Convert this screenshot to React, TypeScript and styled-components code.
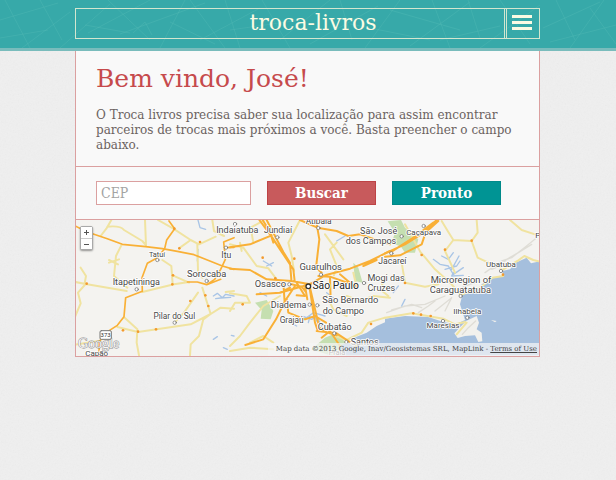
import React from "react";
import styled, { createGlobalStyle } from "styled-components";

const slab = `"DejaVu Serif", serif`;
const slabNarrow = `"DejaVu Serif Condensed", "DejaVu Serif", serif`;

const grain = `url("data:image/svg+xml,%3Csvg xmlns='http://www.w3.org/2000/svg' width='160' height='160'%3E%3Cfilter id='n'%3E%3CfeTurbulence type='fractalNoise' baseFrequency='.6' numOctaves='3' stitchTiles='stitch'/%3E%3CfeColorMatrix type='saturate' values='0'/%3E%3C/filter%3E%3Crect width='160' height='160' filter='url(%23n)' opacity='.07'/%3E%3C/svg%3E")`;

const GlobalStyle = createGlobalStyle`
  * { box-sizing: border-box; }
  body {
    margin: 0;
    min-height: 100vh;
    background: #efefef ${grain};
    font-family: ${slab};
    color: #6b625f;
  }
`;

const Header = styled.header`
  position: relative;
  padding: 8px 76px 9px 75px;
  background: #37a9a9;
  border-bottom: 3px solid #79bcbc;
`;

const HeaderLines = styled.svg`
  position: absolute;
  inset: 0;
  width: 100%;
  height: 100%;
`;

const TitleBar = styled.div`
  position: relative;
  display: flex;
  gap: 1px;
  height: 31px;
  border: 1px solid #d3e6cf;
`;

const SiteTitle = styled.h1`
  flex: 1;
  margin: 0;
  padding-left: 46px;
  border-right: 1px solid #d3e6cf;
  color: #fbfbe3;
  font-size: 22px;
  line-height: 27px;
  font-weight: 400;
  text-align: center;
`;

const MenuButton = styled.button`
  display: flex;
  align-items: center;
  justify-content: center;
  width: 33px;
  padding: 0 2px 2px 0;
  border: 0;
  border-left: 1px solid #d3e6cf;
  background: none;
  cursor: pointer;
`;

const Panel = styled.main`
  margin: 0 76px 0 75px;
  border: solid #dba0a0;
  border-width: 0 1px 1px;
  background: #f9f9f9;
`;

const Welcome = styled.section`
  padding: 12px 20px 13px;
  border-bottom: 1px solid #dba0a0;
`;

const Heading = styled.h2`
  margin: 0 0 13px;
  color: #c64a4c;
  font-size: 25px;
  line-height: 32px;
  font-weight: 400;
`;

const Intro = styled.p`
  margin: 0;
  font-size: 12px;
  line-height: 15px;
`;

const Search = styled.form`
  display: grid;
  grid-template-columns: 155fr 109fr 109fr;
  gap: 16px;
  padding: 14px 38px 14px 20px;
  border-bottom: 1px solid #dba0a0;
`;

const CepInput = styled.input`
  min-width: 0;
  height: 24px;
  padding: 0 4px;
  border: 1px solid #dba0a0;
  border-radius: 0;
  background: #fff;
  color: #6b625f;
  font: 14px ${slabNarrow};
  &::placeholder { color: #a3a3a3; opacity: 1; }
`;

const Action = styled.button<{ $tone: string; $edge: string }>`
  height: 24px;
  padding: 0;
  border: 1px solid ${(p) => p.$edge};
  background: ${(p) => p.$tone};
  color: #fff;
  font: bold 15px/22px ${slabNarrow};
  cursor: pointer;
`;

const MapFrame = styled.section`
  position: relative;
  height: 136px;
  overflow: hidden;
  background: #f4f3f0;
`;

const MapDrawing = styled.svg`
  display: block;
  width: 100%;
  height: 100%;
  font-family: Roboto, sans-serif;
`;

const ZoomControls = styled.div`
  position: absolute;
  top: 6px;
  left: 4px;
  display: flex;
  flex-direction: column;
  border: 1px solid #a9a9a9;
  border-radius: 2px;
  background: #fff;
  box-shadow: 0 1px 2px #0006;
`;

const ZoomButton = styled.button`
  display: flex;
  align-items: center;
  justify-content: center;
  width: 11px;
  height: 11px;
  padding: 0;
  border: 0;
  background: #fff;
  & + & { border-top: 1px solid #ccc; }
`;

const Attribution = styled.div`
  position: absolute;
  right: 0;
  bottom: 0;
  padding: 0 2px 0 8px;
  background: #f5f5f5b8;
  color: #444;
  font-size: 7px;
  line-height: 13px;
  white-space: nowrap;
`;

const TermsLink = styled.a`
  color: inherit;
`;

const headerStrokes =
  "M0 20L58 3M5 0L30 48M22 48L70 12M40 0L62 40M0 38L48 30M60 48L110 4M85 25L130 33M88 33L150 0M108 0L150 40M133 33L145 22L152 35M120 34L205 3M160 48L185 0M170 22L215 44M190 0L225 48M200 40L260 8M225 0L240 48M230 30L300 20M262 0L290 48M280 40L330 0M310 44L378 6M340 0L352 40M350 24L430 40M365 48L400 0M390 10L460 30M410 46L470 2M432 0L450 48M440 40L500 26M468 0L480 38M480 48L540 5M500 0L530 44M543 28L600 2M556 0L575 40M550 42L616 25M570 48L604 0M590 8L616 44";

const minorRoads = [
  { x: -6, d: "M112 12L97 38L80 60M100 32Q140 28 150 42L205 75L216 88M213 12L216 88M298 38L350 72L375 85L425 62M370 85L372 165L385 185M350 72L318 95M142 88L126 120L120 180L160 215M105 132L132 145M105 140L135 130M20 155L36 180L32 202M4 198L35 204L158 225M35 204L12 230L20 262L4 300M265 132L292 150L296 205M205 228L300 205L345 198M296 178L345 200M385 215L410 294L350 325L192 348L130 333M152 305L190 340L188 380L195 418M372 230L330 290L302 320M410 294L388 310L375 360L350 385L348 418M410 294L440 275L480 278M298 38L252 12M415 12L420 45L450 60M75 375L40 380L4 386M455 228L480 225" },
  { x: 462, d: "M0 85L40 95L80 150L115 157L140 190M30 80L35 105M70 80L62 35L100 14M210 12L175 80L185 120L192 165M320 80L300 100L320 150L312 178M285 55L340 130M470 175L450 220L475 240M370 170L378 205M0 232L50 240L60 260L15 260L0 285M150 240L100 270L60 320L30 360L0 390M60 380L100 360L130 380M290 240L310 280L350 300M465 305L415 320L395 350L350 372L315 360M350 240L390 255L430 240L480 245M0 405L60 395L130 400" },
  { x: 927, d: "M170 15L190 48L205 72L260 75L278 50L275 12M205 72L180 105L210 170M260 75L278 125L315 142L348 155M375 12L410 42L450 55M110 112L150 160L200 205L228 238M50 140L60 200L120 212L160 205M0 305L80 292L175 308L210 325L240 318M230 236L285 215L322 185L355 180M60 25L110 115M355 160L400 133L418 120L445 132L460 136M245 320L215 355" },
];

const highways = [
  { x: -6, w: 5, d: "M4 30L40 48L100 68L145 85L215 92L265 98L310 106L360 116L400 132L445 150L480 160M75 410L76 376L102 346L130 328L150 302L155 245L205 226L204 185L220 142L250 125L272 98L278 72L302 38L285 15M340 198L370 198L398 206L422 190L440 160L454 130L449 78L480 65M398 206L440 190M450 95L480 94" },
  { x: 462, w: 6, d: "M0 158L60 162L110 190L185 195L240 205L285 178L360 158L420 135L480 105M88 12L125 62L150 100L190 160L194 195M110 12L135 60L160 108L180 140L184 190M98 12L120 48L130 80M0 94L60 85L125 58M258 12L268 70L258 155L275 170M210 12L262 35L320 45L355 60L390 55L480 85M80 235L150 230L220 210L250 200M46 387L100 370L138 310L165 255L195 210M240 215L268 335L290 350M238 210L255 320L262 340M170 250L175 290L225 310L255 300L288 320M265 180L300 182L380 210M150 230L180 215M200 200L225 240L200 238M225 210L232 250M160 200L165 275M260 345L320 352L378 390M268 340L300 352L320 358M275 365L300 345L330 390M400 150L440 132M330 175L360 200M300 182L302 250M185 205L215 212L228 228" },
  { x: 927, w: 6, d: "M0 112L60 85L130 42L160 15M0 122L45 118L110 85L125 40L155 12M15 110L90 62L145 20" },
];

const greens = [
  { x: 927, d: "M8 16L48 12L60 35L100 70L90 110L60 110L48 92L20 80L30 50Z" },
  { x: 462, d: "M75 260L110 252L130 285L122 310L92 308L95 282ZM244 400L285 365L320 350L365 400L300 418ZM370 140L385 155L398 200L375 195Z" },
];

const waters = [
  { x: 462, d: "M480 312L440 330L410 350L372 365L360 380L340 384L315 418H480Z" },
  { x: 927, d: "M0 308L60 300L130 303L175 318L212 325L240 312L225 265L232 237L260 222L285 215L290 205L322 185L355 180L352 165L375 160L392 140L425 125L438 142L465 136V418H0Z" },
];

const islands =
  "M243 315L275 300L282 320L275 340L290 350L292 376L280 378L270 358L240 360L218 366L208 352ZM318 312L335 315L330 319Z";

const lakes = [
  { x: -6, d: "M418 240L430 232L445 245L455 235L480 240M425 248L440 246L470 244M418 370L430 362M448 395L460 400M472 358L480 360M372 12L378 35L395 40M372 100L370 135" },
  { x: 462, d: "M100 135L125 150M110 150L130 140M215 300L245 310L260 300L275 330M235 320L240 300M250 290L285 300M110 240L90 230M320 75L345 60M180 320L200 330M290 230L310 245M220 312L250 290L262 318" },
  { x: 927, d: "M145 130L165 145L190 150L205 175L235 155M170 120L190 130L205 110M180 160L215 150L225 135M25 230L40 210M60 250L50 270M205 170L200 180L235 178M222 120L200 160" },
];

const reliefs =
  "M5 290L60 270L120 265L180 240M20 282L80 265L110 275M150 285L200 245L180 285M300 170L350 135L380 125L418 95L455 65M320 160L345 150L365 130L400 110L440 85M205 230L240 210L270 200M100 290L130 270L150 255M232 355L250 335L272 315";

const places: [string, number, number, number][] = [
  ["Indaiatuba", 484, 52, 27], ["Jundiaí", 606, 52, 26], ["Atibaia", 728, 24, 25],
  ["Tatuí", 243, 123, 22], ["Itu", 451, 126, 26], ["Sorocaba", 392, 182, 28],
  ["Itapetininga", 181, 208, 27], ["Pilar do Sul", 295, 309, 25], ["Capão", 62, 421, 24],
  ["Guarulhos", 734, 163, 28], ["Osasco", 583, 214, 28], ["São Paulo", 779, 220, 31],
  ["São Bernardo", 823, 261, 28], ["do Campo", 802, 294, 27], ["Diadema", 638, 275, 27],
  ["Grajaú", 647, 322, 25], ["Cubatão", 776, 341, 27], ["Santos", 866, 386, 27],
  ["Praia", 783, 418, 22], ["São José", 908, 54, 27], ["dos Campos", 885, 85, 27],
  ["Caçapava", 1043, 58, 24], ["Jacareí", 949, 143, 26], ["Mogi das", 930, 195, 27],
  ["Cruzes", 916, 224, 27], ["Ubatuba", 1275, 154, 24], ["Microregion of", 1155, 201, 28],
  ["Caraguatatuba", 1153, 230, 28], ["Ilhabela", 1174, 295, 24], ["Maresias", 1101, 337, 24],
  ["P", 1385, 65, 24],
];

const towns = [
  [244, 132], [450, 95], [392, 195], [182, 220], [296, 320], [477, 24], [604, 64],
  [727, 36], [735, 176], [640, 205], [701, 266], [724, 268], [775, 352], [811, 378],
  [864, 201], [977, 61], [1043, 30], [946, 112], [1275, 165], [1154, 240], [1174, 305], [1101, 315],
];

const junctions = [
  [291, 178], [289, 205], [343, 255], [388, 238], [397, 270], [240, 340], [186, 347],
  [141, 343], [32, 203], [372, 78], [295, 38], [310, 97], [1107, 101], [1187, 74],
  [1281, 176], [1037, 117], [987, 201], [1012, 292], [1035, 296], [1064, 300], [560, 125],
  [598, 187], [655, 128], [500, 265], [885, 324],
];

function CityMap() {
  return (
    <MapDrawing viewBox="0 0 1389 408" preserveAspectRatio="xMidYMid slice" role="img" aria-label="Mapa de São Paulo">
      <g transform="translate(0 -12)" fill="none" strokeLinejoin="round" strokeLinecap="round">
        {greens.map((g) => <path key={g.d} d={g.d} transform={`translate(${g.x} 0)`} fill="#c5dfb0" />)}
        {waters.map((g) => <path key={g.d} d={g.d} transform={`translate(${g.x} 0)`} fill="#a5bfdd" />)}
        <g transform="translate(927 0)">
          <path d={islands} fill="#f2f1ed" />
          <path d={reliefs} stroke="#dfddd6" strokeWidth="4" />
        </g>
        {lakes.map((g) => <path key={g.d} d={g.d} transform={`translate(${g.x} 0)`} stroke="#a9c5e6" strokeWidth="4" />)}
        {minorRoads.map((g) => <path key={g.d} d={g.d} transform={`translate(${g.x} 0)`} stroke="#f0e3a0" strokeWidth="6" />)}
        {highways.map((g) => <path key={g.d} d={g.d} transform={`translate(${g.x} 0)`} stroke="#f9b036" strokeWidth={g.w} />)}
        {junctions.map(([x, y]) => <circle key={`${x}-${y}`} cx={x} cy={y} r="4" fill="#f39a2d" />)}
        {towns.map(([x, y]) => <circle key={`${x}-${y}`} cx={x} cy={y} r="5" fill="#fff" stroke="#666" strokeWidth="2" />)}
        <circle cx="697" cy="211" r="7" fill="#fff" stroke="#333" strokeWidth="4" />
        <g fill="#484848" stroke="#fff" strokeWidth="5" paintOrder="stroke" textAnchor="middle">
          {places.map(([name, x, y, size]) => (
            <text key={name} x={x} y={y} fontSize={size} fill={size > 30 ? "#222" : undefined}>{name}</text>
          ))}
        </g>
        <text x="6" y="397" fontFamily="Liberation Serif, serif" fontSize="42" fill="#f6f6f6" stroke="#8f8f8f" strokeWidth="3" paintOrder="stroke">Google</text>
        <rect x="72" y="344" width="34" height="26" rx="4" fill="#fff" stroke="#777" strokeWidth="3" />
        <text x="89" y="364" fontSize="18" fill="#333" textAnchor="middle">373</text>
      </g>
    </MapDrawing>
  );
}

export default function App() {
  return (
    <>
      <GlobalStyle />
      <Header>
        <HeaderLines viewBox="0 0 616 48" preserveAspectRatio="xMidYMid slice" aria-hidden="true">
          <path d={headerStrokes} fill="none" stroke="#5cc0ba" strokeOpacity=".3" />
        </HeaderLines>
        <TitleBar>
          <SiteTitle>troca-livros</SiteTitle>
          <MenuButton type="button" aria-label="Menu">
            <svg width="20" height="15" viewBox="0 0 20 15" fill="#fbfbe3">
              <path d="M0 0h20v3H0zM0 6h20v3H0zM0 12h20v3H0z" />
            </svg>
          </MenuButton>
        </TitleBar>
      </Header>
      <Panel>
        <Welcome>
          <Heading>Bem vindo, José!</Heading>
          <Intro>
            O Troca livros precisa saber sua localização para assim encontrar
            parceiros de trocas mais próximos a você. Basta preencher o campo
            abaixo.
          </Intro>
        </Welcome>
        <Search onSubmit={(e) => e.preventDefault()}>
          <CepInput aria-label="CEP" placeholder="CEP" />
          <Action type="submit" $tone="#c85a5c" $edge="#bd4346">Buscar</Action>
          <Action type="button" $tone="#009494" $edge="#008a8a">Pronto</Action>
        </Search>
        <MapFrame>
          <CityMap />
          <ZoomControls>
            <ZoomButton type="button" aria-label="Aumentar zoom">
              <svg width="7" height="7" viewBox="0 0 7 7"><path d="M3 1h1v2h2v1H4v2H3V4H1V3h2z" fill="#555" /></svg>
            </ZoomButton>
            <ZoomButton type="button" aria-label="Diminuir zoom">
              <svg width="7" height="7" viewBox="0 0 7 7"><path d="M1 3h5v1H1z" fill="#555" /></svg>
            </ZoomButton>
          </ZoomControls>
          <Attribution>
            Map data ©2013 Google, Inav/Geosistemas SRL, MapLink - <TermsLink href="#terms">Terms of Use</TermsLink>
          </Attribution>
        </MapFrame>
      </Panel>
    </>
  );
}
